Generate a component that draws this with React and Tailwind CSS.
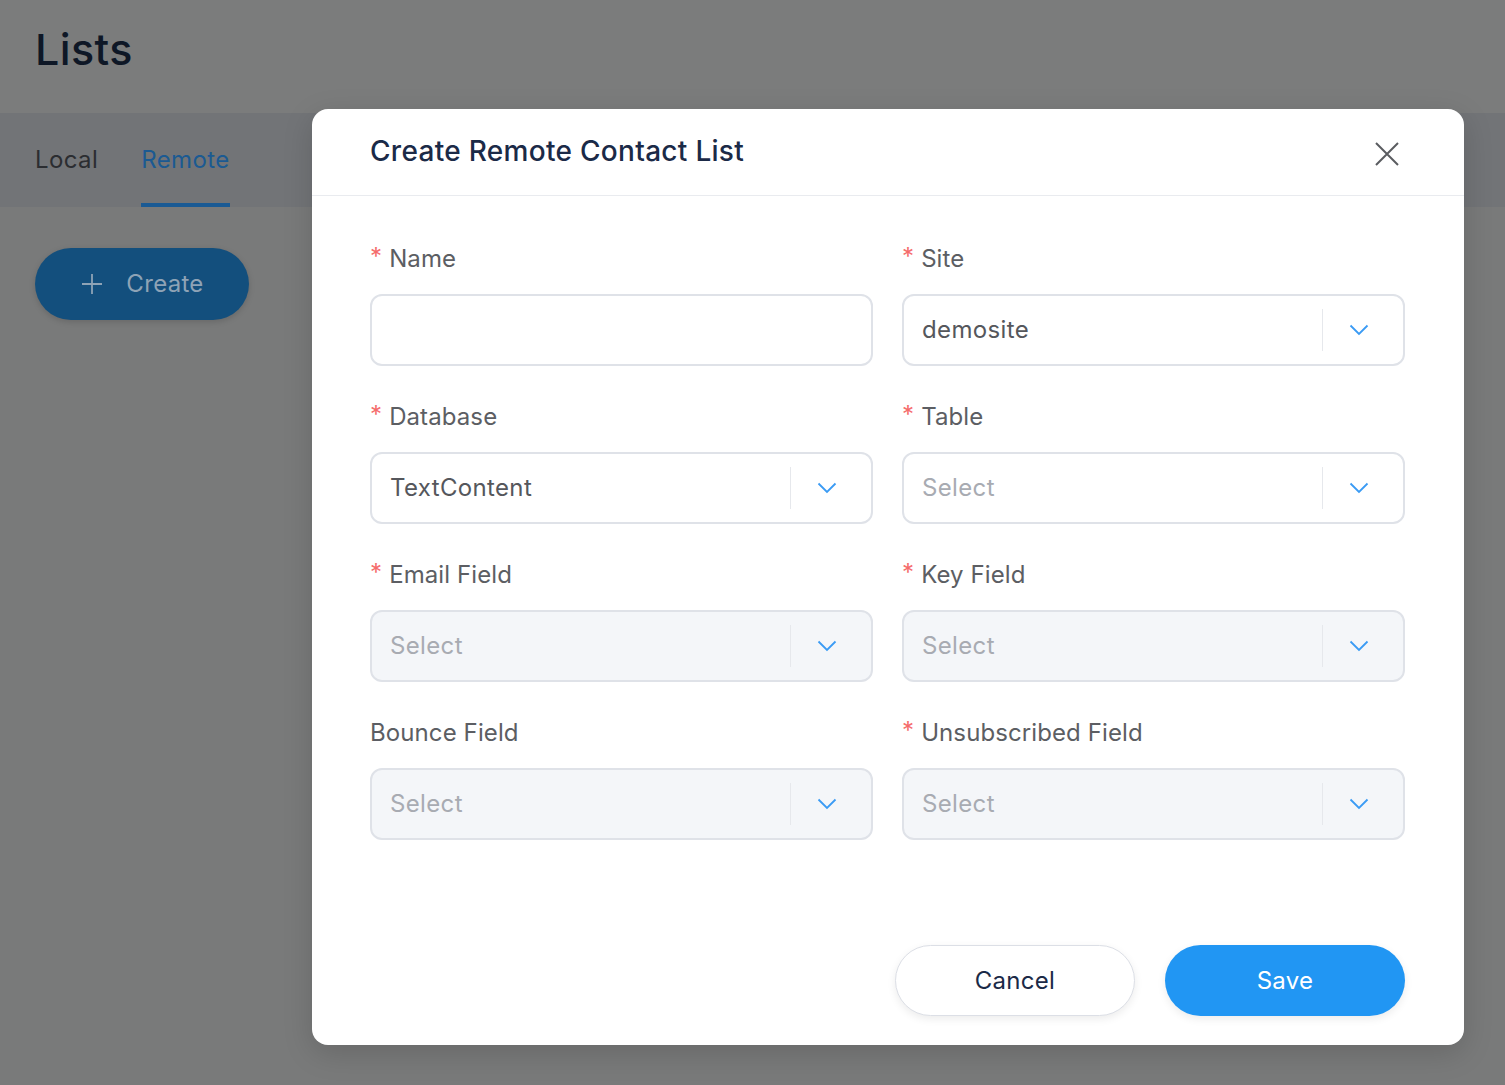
import React from "react";

const font = { fontFamily: "Inter, 'Noto Sans', sans-serif" };

function Chevron() {
  return (
    <svg width="20" height="12" viewBox="0 0 20 12" fill="none">
      <path d="M1.5 1.5 L10 10 L18.5 1.5" stroke="#3a9bf4" strokeWidth="1.8" />
    </svg>
  );
}

function Label({ text, required }) {
  return (
    <div className="h-[36px] flex items-center text-[24px] text-[#5c5e63] leading-none tracking-[0.1px]">
      {required && <span className="text-[#f56c6c] mr-[7px] text-[24px] relative top-[-2px]">*</span>}
      <span>{text}</span>
    </div>
  );
}

function SelectBox({ value, placeholder, disabled }) {
  return (
    <div
      className={`h-[72px] rounded-[12px] border-2 border-[#dfe2e8] flex items-center pl-[18px] pr-[34px] ${
        disabled ? "bg-[#f4f6f9]" : "bg-white"
      }`}
    >
      <span className={`flex-1 text-[24px] tracking-[0.35px] ${value ? "text-[#55575c]" : "text-[#a8abb2]"}`}>
        {value || placeholder}
      </span>
      <div className="w-px h-[42px] bg-[#e6e8ec] mr-[26px]" />
      <Chevron />
    </div>
  );
}

function Field({ label, required, children }) {
  return (
    <div className="flex flex-col mb-[33px]">
      <Label text={label} required={required} />
      <div className="mt-[17px]">{children}</div>
    </div>
  );
}

export default function App() {
  return (
    <div className="relative w-[1505px] h-[1085px] overflow-hidden bg-[#797a7a]" style={font}>
      {/* page underneath the overlay */}
      <div className="h-[113px] bg-[#7b7c7c] px-[35px] pt-[24px]">
        <h1 className="text-[43px] leading-[50px] font-medium text-[#0e1726] tracking-[0.4px]">Lists</h1>
      </div>
      <div className="h-[94px] bg-[#727477] px-[35px] flex items-stretch gap-[43px] tracking-[0.4px]">
        <div className="flex items-center text-[24px] text-[#2b2d31]">Local</div>
        <div className="relative flex items-center text-[24px] text-[#1b5a92]">
          Remote
          <div className="absolute left-0 right-0 bottom-0 h-[4px] bg-[#1a5a94]" />
        </div>
      </div>
      <div className="px-[35px] pt-[41px]">
        <button className="w-[214px] h-[72px] rounded-full bg-[#134f7d] flex items-center justify-center gap-[22px] text-[24px] text-[#8ea3b6] tracking-[0.3px] shadow-[0_2px_6px_rgba(0,0,0,0.15)]">
          <svg width="24" height="24" viewBox="0 0 24 24" fill="none">
            <path d="M12 2 V22 M2 12 H22" stroke="#8ea3b6" strokeWidth="1.8" />
          </svg>
          Create
        </button>
      </div>

      {/* dialog */}
      <div className="absolute left-[312px] top-[109px] w-[1152px] h-[936px] bg-white rounded-[16px] shadow-[0_8px_30px_rgba(0,0,0,0.15)] flex flex-col">
        <div className="h-[87px] border-b border-[#e9ebef] flex items-center justify-between pl-[58px] pr-[64px] pb-[2px]">
          <h2 className="text-[28px] font-medium text-[#1b2a47] tracking-[0.3px]">Create Remote Contact List</h2>
          <svg width="26" height="26" viewBox="0 0 26 26" fill="none" className="mt-[6px]">
            <path d="M2 2 L24 24 M24 2 L2 24" stroke="#5a5c60" strokeWidth="2" />
          </svg>
        </div>

        <div className="px-[58px] pt-[45px] grid grid-cols-[503px_503px] gap-x-[29px]">
          <Field label="Name" required>
            <div className="h-[72px] rounded-[12px] border-2 border-[#dfe2e8] bg-white" />
          </Field>
          <Field label="Site" required>
            <SelectBox value="demosite" />
          </Field>
          <Field label="Database" required>
            <SelectBox value="TextContent" />
          </Field>
          <Field label="Table" required>
            <SelectBox placeholder="Select" />
          </Field>
          <Field label="Email Field" required>
            <SelectBox placeholder="Select" disabled />
          </Field>
          <Field label="Key Field" required>
            <SelectBox placeholder="Select" disabled />
          </Field>
          <Field label="Bounce Field">
            <SelectBox placeholder="Select" disabled />
          </Field>
          <Field label="Unsubscribed Field" required>
            <SelectBox placeholder="Select" disabled />
          </Field>
        </div>

        <div className="mt-auto flex justify-end gap-[30px] pr-[59px] pb-[29px] tracking-[0.3px]">
          <button className="w-[240px] h-[71px] rounded-full border border-[#dcdfe6] bg-white text-[24px] text-[#1b2a47] shadow-[0_3px_8px_rgba(0,0,0,0.08)]">
            Cancel
          </button>
          <button className="w-[240px] h-[71px] rounded-full bg-[#2196f3] text-[24px] text-white shadow-[0_3px_8px_rgba(0,0,0,0.08)]">
            Save
          </button>
        </div>
      </div>
    </div>
  );
}
